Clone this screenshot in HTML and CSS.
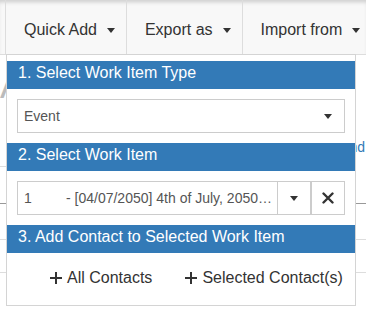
FILE: index.html
```html
<!DOCTYPE html>
<html lang="en">
<head>
  <meta charset="UTF-8">
  <meta name="viewport" content="width=device-width, initial-scale=1.0">
  <title>Quick Add</title>
  <link rel="stylesheet" href="styles.css">
</head>
<body>

  <div class="toolbar">
    <div class="tool">Quick Add <span class="caret"></span></div>
    <div class="tool">Export as <span class="caret"></span></div>
    <div class="tool">Import from <span class="caret"></span></div>
  </div>

  <div class="page">
    <h1 class="page-title">A</h1>
    <div class="page-actions"><a href="#">Expand</a></div>
    <div class="grid">
      <div class="grid-row grid-head"><div class="grid-check"></div></div>
      <div class="grid-row grid-row-2"></div>
      <div class="grid-row grid-row-3"></div>
    </div>
  </div>

  <div class="quick-add">
    <div class="qa-head">1. Select Work Item Type</div>
    <div class="qa-field">
      <div class="qa-select">
        <span>Event</span>
        <span class="caret"></span>
      </div>
    </div>

    <div class="qa-head">2. Select Work Item</div>
    <div class="qa-field">
      <div class="qa-combo">
        <div class="qa-combo-text">
          <span class="qa-num">1</span>
          <span class="qa-desc">- [04/07/2050] 4th of July, 2050…</span>
        </div>
        <div class="qa-combo-arrow"><span class="caret"></span></div>
      </div>
      <button type="button" class="qa-clear">
        <svg width="12" height="12" viewBox="0 0 12 12"><path d="M1.5 1.5l9 9M10.5 1.5l-9 9" stroke="#333" stroke-width="2.4" stroke-linecap="round"/></svg>
      </button>
    </div>

    <div class="qa-head">3. Add Contact to Selected Work Item</div>
    <div class="qa-actions">
      <button type="button" class="qa-btn">
        <svg width="12" height="12" viewBox="0 0 12 12"><path d="M5 0h2v12H5zM0 5h12v2H0z" fill="#333"/></svg>
        All Contacts
      </button>
      <button type="button" class="qa-btn">
        <svg width="12" height="12" viewBox="0 0 12 12"><path d="M5 0h2v12H5zM0 5h12v2H0z" fill="#333"/></svg>
        Selected Contact(s)
      </button>
    </div>
  </div>

</body>
</html>
```

FILE: styles.css
```css
body {
  margin: 0;
  font-family: "Liberation Sans", Arial, sans-serif;
  color: #333;
  overflow: hidden;
}

.toolbar {
  display: flex;
  padding-left: 5px;
  background-color: #f8f8f8;
  border-bottom: 1px solid #ddd;
  box-shadow: inset 0 4px 4px -2px rgba(0, 0, 0, 0.18);
  white-space: nowrap;
}

.tool {
  display: flex;
  align-items: center;
  flex-shrink: 0;
  padding: 20px 11px 14px 18px;
  font-size: 16px;
  line-height: 20px;
  border-left: 1px solid #ddd;
}

.tool .caret {
  margin-left: 10px;
}

.caret {
  display: inline-block;
  width: 0;
  height: 0;
  border-top: 5px solid #333;
  border-left: 4px solid transparent;
  border-right: 4px solid transparent;
}

.page-title {
  margin: 11px 0 0;
  font-size: 36px;
  line-height: 40px;
  font-weight: normal;
  color: #bbb;
}

.page-actions {
  margin-top: 31px;
  text-align: right;
  font-size: 14px;
  line-height: 20px;
  padding-right: 1px;
}

.page-actions a {
  color: #337ab7;
  text-decoration: none;
}

.grid {
  margin-top: 9px;
}

.grid-row {
  border-bottom: 1px solid #ddd;
}

.grid-head {
  border-bottom-color: #999;
}

.grid-check {
  width: 40px;
  height: 36px;
  border-top: 1px solid #ddd;
}

.grid-row-2 {
  height: 35px;
}

.grid-row-3 {
  height: 32px;
}

.quick-add {
  position: absolute;
  top: 54px;
  left: 6px;
  width: 348px;
  padding-top: 6px;
  background-color: white;
  border: 1px solid #d4d4d4;
}

.qa-head {
  padding: 1px 11px 5px;
  background-color: #337ab7;
  color: white;
  font-size: 16px;
  line-height: 22px;
}

.qa-field {
  display: flex;
  padding: 10px;
}

.qa-select {
  flex: 1;
  display: flex;
  align-items: center;
  justify-content: space-between;
  height: 32px;
  padding: 0 12px 0 6px;
  border: 1px solid #ccc;
  font-size: 14px;
  color: #555;
}

.qa-combo {
  flex: 1;
  display: flex;
  height: 32px;
  border: 1px solid #ccc;
  min-width: 0;
}

.qa-combo-text {
  flex: 1;
  display: flex;
  align-items: center;
  min-width: 0;
  padding: 0 6px;
  font-size: 14px;
  color: #555;
}

.qa-num {
  width: 42px;
  flex-shrink: 0;
}

.qa-desc {
  overflow: hidden;
  white-space: nowrap;
}

.qa-combo-arrow {
  display: flex;
  align-items: center;
  justify-content: center;
  width: 32px;
  border-left: 1px solid #ccc;
}

.qa-clear {
  display: flex;
  align-items: center;
  justify-content: center;
  width: 34px;
  height: 34px;
  padding: 0;
  background: white;
  border: 1px solid #ccc;
  cursor: pointer;
}

.qa-actions {
  display: flex;
  gap: 9px;
  padding: 9px 0 11px 31px;
}

.qa-btn {
  display: flex;
  align-items: center;
  gap: 5px;
  padding: 6px 12px;
  background: none;
  border: none;
  font-family: inherit;
  font-size: 16px;
  line-height: 20px;
  color: #333;
  cursor: pointer;
}
```
